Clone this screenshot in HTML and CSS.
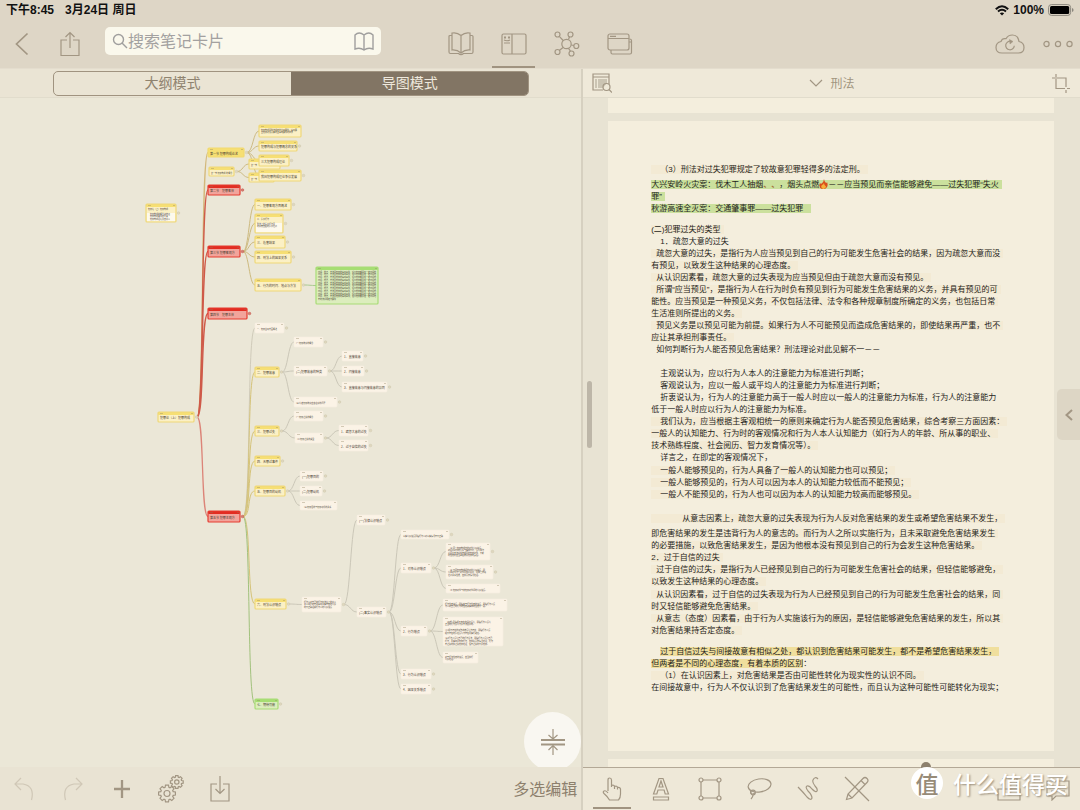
FILE: index.html
```html
<!DOCTYPE html>
<html lang="zh-CN">
<head>
<meta charset="utf-8">
<meta name="viewport" content="width=device-width, initial-scale=1">
<title>刑法</title>
<link rel="stylesheet" href="styles.css">
</head>
<body>
<div class="app">
  <header class="top">
    <div class="status">
      <span>下午8:45</span><span>3月24日 周日</span>
      <span class="power">
        <svg width="14" height="11" viewBox="0 0 14 11" fill="none" stroke="#111" stroke-width="2"><path d="M.8 4.200Q7-1.800 13.200 4.200M3 6.600Q7 3 11 6.600"/><path d="M4.800 8.300Q7 6.500 9.200 8.300L7 10.600Z" fill="#111" stroke="none"/></svg>
        <span>100%</span>
        <svg width="26" height="12" viewBox="0 0 26 12"><rect x=".6" y=".6" width="22" height="10.800" rx="2.800" fill="none" stroke="#8b877d"/><rect x="2" y="2" width="19.200" height="8" rx="1.500" fill="#000"/><path d="M24 4v4q1.600-.6 1.600-2T24 4" fill="#8b877d"/></svg>
      </span>
    </div>
    <nav class="tools">
      <button class="ib" aria-label="返回"><svg width="14" height="24" viewBox="0 0 14 24"><path d="M12.500 1.500L1.500 12L12.500 22.500" stroke-width="1.700"/></svg></button>
      <button class="ib share" aria-label="分享"><svg width="20" height="26" viewBox="0 0 20 26"><path d="M7 9H1v15.500h18V9h-6M10 17V1.500M5.500 6L10 1.500L14.500 6"/></svg></button>
      <label class="search">
        <svg width="16" height="16" viewBox="0 0 16 16"><circle cx="6.500" cy="6.500" r="5"/><path d="M10 10l5 5"/></svg>
        <input type="search" placeholder="搜索笔记卡片" aria-label="搜索笔记卡片">
        <svg width="20" height="19" viewBox="0 0 20 19"><path d="M10 3Q5-1 1 3v14q5-2 9 1q4-3 9-1V3Q15-1 10 3v15"/></svg>
      </label>
      <div class="modes">
        <button class="ib" aria-label="阅读"><svg width="26" height="26" viewBox="0 0 26 26"><path d="M13 4.500Q9 1 4 2v17q5-.5 9 3q4-3.500 9-3V2q-5-1-9 2.500v17.500M4 4.500H2q-1 0-1 1V21q0 1.500 1.500 1.500h8q2.500 2.500 5 0h8q1.500 0 1.500-1.500V5.500q0-1-1-1h-2"/></svg></button>
        <button class="ib on" aria-label="分栏"><svg width="26" height="22" viewBox="0 0 26 22"><rect x="1" y="1" width="24" height="20" rx="1.500"/><path d="M11 1v20M3 7q3 1.500 6 0M3 10h6" /><path d="M3 4.500h2M7 4.500h2" stroke-width="2"/></svg></button>
        <button class="ib" aria-label="脑图"><svg width="26" height="26" viewBox="0 0 26 26"><circle cx="12.500" cy="13" r="4.700"/><circle cx="3.500" cy="3.500" r="2.500"/><circle cx="16.500" cy="3.500" r="2.500"/><circle cx="22.300" cy="15" r="2.500"/><circle cx="3.500" cy="21" r="2.500"/><circle cx="17.500" cy="22.500" r="2.500"/><path d="M5.300 5.300L9.200 9.500M15.500 5.800L14.500 8.500M17.200 14l2.700.5M9 16.500l-3.700 3M14.500 17.400l2 2.800"/></svg></button>
        <button class="ib" aria-label="窗口"><svg width="26" height="22" viewBox="0 0 26 22"><rect x="1" y="1" width="21" height="16" rx="2"/><path d="M1 5.500h21M3 3.300h6M4 17v2.500Q4 21 5.500 21H23q1.500 0 1.500-1.500V7.500q0-1.500-2-1.500M22 9h2.500"/></svg></button>
      </div>
      <div class="right">
        <button class="ib" aria-label="同步"><svg width="30" height="20" viewBox="0 0 30 20"><path d="M7 19Q1 19 1 13.500Q1 8.500 6 7.500Q7 4 11 4.700Q13 1 17.500 1Q23 1 24 7.500Q29 8.500 29 13.500Q29 19 23.500 19Z"/><path d="M16 7.300a4.300 4.300 0 1 0 3.300 4.500"/><path d="M14.500 5.500l3.500 2l-3 2.500z" fill="#a09380" stroke-width=".5"/></svg></button>
        <button class="ib" aria-label="更多"><svg width="30" height="8" viewBox="0 0 30 8"><circle cx="3.500" cy="4" r="2.600"/><circle cx="15" cy="4" r="2.600"/><circle cx="26.500" cy="4" r="2.600"/></svg></button>
      </div>
    </nav>
  </header>
  <main class="split">
    <section class="left">
      <div class="subbar segbar"><div class="seg"><button>大纲模式</button><button class="sel">导图模式</button></div></div>
      <div class="canvas">
        <svg id="map" class="map" width="582" height="669" viewBox="0 98 582 669"></svg>
        <button class="collapse" aria-label="折叠"><svg width="26" height="28" viewBox="0 0 26 28"><path d="M1 12h24M1 16.500h24" stroke-width="1.800"/><path d="M13 1v10M8.500 7l4.500 4l4.500-4M13 27V17.500M8.500 22l4.500-4.500l4.500 4.500"/></svg></button>
      </div>
      <footer class="bar">
        <button class="ib dim" aria-label="撤销"><svg width="20" height="24" viewBox="0 0 20 24"><path d="M7 1L1 7l6 6M1 7h8q12 2 8.500 16"/></svg></button>
        <button class="ib dim" aria-label="重做"><svg width="20" height="24" viewBox="0 0 20 24"><path d="M13 1l6 6l-6 6M19 7h-8q-12 2-8.500 16"/></svg></button>
        <button class="ib" aria-label="添加"><svg width="16" height="18" viewBox="0 0 16 18"><path d="M8 0v18M0 9h16" stroke-width="2.300"/></svg></button>
        <button class="ib" aria-label="设置"><svg id="gears" width="26" height="28" viewBox="0 0 26 28"></svg></button>
        <button class="ib" aria-label="导入"><svg width="20" height="26" viewBox="0 0 20 26"><path d="M7 8H1v17h18V8h-6M10 0v17.500M5.500 13l4.500 4.500l4.500-4.500"/></svg></button>
        <button class="multi">多选编辑</button>
      </footer>
    </section>
    <section class="reader">
      <div class="subbar docbar">
        <button class="ib" aria-label="目录"><svg width="20" height="20" viewBox="0 0 20 20"><path d="M11 17H1V1h16v10M1 4h16"/><path d="M3 6h2v9H3zM6 6h9v4l-4 5H6z" fill="#cbc4b3" stroke="none"/><circle cx="14.500" cy="14" r="3.500"/><path d="M17 16.500l3 3"/></svg></button>
        <button class="title"><svg width="14" height="8" viewBox="0 0 14 8"><path d="M1 1l6 6l6-6"/></svg>刑法</button>
        <button class="ib" aria-label="裁剪"><svg width="18" height="19" viewBox="0 0 18 19"><path d="M4 0v3M4 5v9.500h9M15 14.500h3M0 4h14v9M14 16v3"/></svg></button>
      </div>
      <div class="doc">
        <div class="page prev"></div>
        <article class="page">
          <p><span class="m i2">（3）刑法对过失犯罪规定了较故意犯罪轻得多的法定刑。</span></p>
          <p class="g3"><span class="green">大兴安岭火灾案：伐木工人抽烟<b class="ember">、、</b>，烟头点燃<svg class="fire" width="9" height="10" viewBox="0 0 9 10"><path d="M5 0Q5 2 7 4q1 0 1-1Q10 8 6 10H3Q-1 8 1 4l1 1Q5 3 5 0" fill="#d94f1c"/><path d="M5 4q0 2 1.500 3T5 10H4Q1 8 3 6q1 0 2-2" fill="#f6b13b"/></svg>－－应当预见而亲信能够避免——过失犯罪“失火</span><br><span class="green">罪”</span><br><span class="green end">秋游高速全灭案：交通肇事罪——过失犯罪</span></p>
          <p class="g9"><span class="m">(二)犯罪过失的类型</span><br><span class="i2">1．疏忽大意的过失</span></p>
          <p><span class="m i1">疏忽大意的过失，是指行为人应当预见到自己的行为可能发生危害社会的结果，因为疏忽大意而没</span><br><span class="m">有预见，以致发生这种结果的心理态度。</span></p>
          <p><span class="m i1">从认识因素看，疏忽大意的过失表现为应当预见但由于疏忽大意而没有预见。</span></p>
          <p><span class="m i1">所谓“应当预见”，是指行为人在行为时负有预见到行为可能发生危害结果的义务，并具有预见的可</span><br><span class="m">能性。应当预见是一种预见义务，不仅包括法律、法令和各种规章制度所确定的义务，也包括日常</span><br><span class="m">生活准则所提出的义务。</span></p>
          <p><span class="m i1">预见义务是以预见可能为前提。如果行为人不可能预见而造成危害结果的，即使结果再严重，也不</span><br><span class="m">应让其承担刑事责任。</span></p>
          <p><span class="i1">如何判断行为人能否预见危害结果？刑法理论对此见解不一－－</span></p>
          <p class="g12"><span class="i2">主观说认为，应以行为人本人的注意能力为标准进行判断；</span><br><span class="i2">客观说认为，应以一般人或平均人的注意能力为标准进行判断；</span><br><span class="i2">折衷说认为，行为人的注意能力高于一般人时应以一般人的注意能力为标准，行为人的注意能力</span><br><span>低于一般人时应以行为人的注意能力为标准。</span></p>
          <p><span class="m i2">我们认为，应当根据主客观相统一的原则来确定行为人能否预见危害结果，综合考察三方面因素：</span><br><span class="m">一般人的认知能力、行为时的客观情况和行为人本人认知能力（如行为人的年龄、所从事的职业、</span><br><span class="m">技术熟练程度、社会阅历、智力发育情况等）。</span><br><span class="i2">详言之，在即定的客观情况下，</span></p>
          <p class="g1"><span class="m i2">一般人能够预见的，行为人具备了一般人的认知能力也可以预见；</span><br><span class="m i2">一般人能够预见的，行为人可以因为本人的认知能力较低而不能预见；</span><br><span class="m i2">一般人不能预见的，行为人也可以因为本人的认知能力较高而能够预见。</span></p>
          <p class="g12"><span class="m i4">从意志因素上，疏忽大意的过失表现为行为人反对危害结果的发生或希望危害结果不发生，</span></p>
          <p class="g3"><span class="m">即危害结果的发生是违背行为人的意志的。而行为人之所以实施行为，且未采取避免危害结果发生</span><br><span class="m">的必要措施，以致危害结果发生，是因为他根本没有预见到自己的行为会发生这种危害结果。</span><br><span class="m">2．过于自信的过失</span></p>
          <p><span class="m i1">过于自信的过失，是指行为人已经预见到自己的行为可能发生危害社会的结果，但轻信能够避免，</span><br><span class="m">以致发生这种结果的心理态度。</span></p>
          <p class="g1"><span class="m i1">从认识因素看，过于自信的过失表现为行为人已经预见到自己的行为可能发生危害社会的结果，同</span><br><span class="m">时又轻信能够避免危害结果。</span></p>
          <p><span class="m i1">从意志（态度）因素看，由于行为人实施该行为的原因，是轻信能够避免危害结果的发生，所以其</span><br><span class="m">对危害结果持否定态度。</span></p>
          <p class="g9"><span class="yellow in">过于自信过失与间接故意有相似之处，都认识到危害结果可能发生，都不是希望危害结果发生，</span><br><span class="yellow">但两者是不同的心理态度，有着本质的区别</span>：<br><span class="m i2">（1）在认识因素上，对危害结果是否由可能性转化为现实性的认识不同。</span><br><span>在间接故意中，行为人不仅认识到了危害结果发生的可能性，而且认为这种可能性可能转化为现实；</span></p>
        </article>
        <div class="page next"></div>
        <span class="grip"></span>
        <button class="drawer" aria-label="展开"><svg width="8" height="12" viewBox="0 0 8 12"><path d="M7 1L1.500 6L7 11" stroke-width="2"/></svg></button>
      </div>
      <footer class="bar ink">
        <span class="knob"></span>
        <button class="ib on" aria-label="手型"><svg width="20" height="24" viewBox="0 0 20 24"><path d="M6 14V3q0-2 1.700-2T9.500 3v7V8.500q2.500-1 3 1q2.500-1 3 1q2.500-.5 3 1.500v5q0 4-2 6H7.500Q6 20 2 16.500q-1.500-1.700 0-2.500q2-1 4 2M12.500 9.500V12M15.500 10.500v2"/></svg></button>
        <button class="ib" aria-label="高亮"><svg width="18" height="24" viewBox="0 0 18 24"><path d="M1.500 17L7 1.500h4L16.500 17h-3.300l-1.100-4H6l-1.200 4zM7 10h4L9 4zM1.500 20h15v3h-15z"/></svg></button>
        <button class="ib" aria-label="选框"><svg width="24" height="24" viewBox="0 0 24 24"><circle cx="3" cy="3" r="2"/><circle cx="21" cy="3" r="2"/><circle cx="3" cy="21" r="2"/><circle cx="21" cy="21" r="2"/><path d="M5 3h14M5 21h14M3 5v14M21 5v14"/></svg></button>
        <button class="ib" aria-label="套索"><svg width="26" height="24" viewBox="0 0 26 24"><ellipse cx="13.500" cy="8.500" rx="11.500" ry="6.500" transform="rotate(-9 13 8)"/><circle cx="7" cy="15.500" r="2.300"/><path d="M4.500 13Q4 19 9 16M7 18q0 2-2 4"/></svg></button>
        <button class="ib" aria-label="画笔"><svg width="22" height="24" viewBox="0 0 22 24"><path d="M1 10q5 5 9 10q4 4 5 1q0-3-4-7q-3-4-1-5q2-1 5 3q4 4 5 2q1-2-2-5q-3-4-2-6q2-4 5-1"/></svg></button>
        <button class="ib" aria-label="铅笔"><svg width="26" height="26" viewBox="0 0 26 26"><path d="M1 1l24 24M2.500 23.500L4 18L19 2.500q2-2 4 0t0 4L8 22zM17 4.500l4 4M4 18l4 4"/></svg></button>
        <button class="ib stamp" aria-label="文字框"><svg width="24" height="24" viewBox="0 0 24 24"><path d="M6 1h14v10M1 12h22v11H1zM6 12V1"/></svg></button>
        <button class="ib" aria-label="评论"><svg width="24" height="24" viewBox="0 0 24 24"><path d="M1 4h22v15H10l-4 4v-4H1zM5 9h14M5 14h14"/></svg></button>
        <div class="mark"><span class="disc">值</span><span>什么值得买</span></div>
      </footer>
    </section>
  </main>
</div>
<script src="map.js"></script>
</body>
</html>
```
FILE: map.js
```js
const NS = 'http://www.w3.org/2000/svg';
function el(parent, tag, attrs, text) {
  const e = document.createElementNS(NS, tag);
  for (const k in attrs) e.setAttribute(k, attrs[k]);
  if (text) e.textContent = text;
  parent.appendChild(e);
  return e;
}
const map = document.getElementById('map');
const themes = {
  y: { edge: '#efd879', head: '#f6df73', body: '#fbf0c5' },
  Y: { edge: '#f1da70', head: '#f6df73', body: '#f6df73' },
  r: { edge: '#e53c31', head: '#e22d22', body: '#f2a49b' },
  w: { edge: '#f6eee0', head: '#fbf3e6', body: '#fbf3e6' },
  g: { edge: '#a8dc76', head: '#a6de72', body: '#dcedbd' }
};
// id: [x, y, width, height, theme, text lines, font size]
const nodes = {
  a: [208, 148, 36, 9, 'Y', ['第一节 犯罪构成论述'], 3],
  b: [209, 167, 25, 9, 'y', ['第一节 犯罪构成 的 概念'], 2],
  a1: [259, 125, 42, 12, 'y', ['犯罪构成是刑法规定的主观要件，客观要', '立犯罪必须具备的主客观要件的整体'], 2],
  a2: [259, 141, 38, 10, 'y', ['犯罪构成与犯罪概念的关系'], 3],
  b1: [249, 159, 31, 10, 'y', ['第一节'], 2],
  b2: [249, 173, 25, 9, 'y', ['第一节'], 2],
  a3: [259, 155, 30, 11, 'y', ['三大犯罪构成理论'], 3],
  a4: [259, 170, 42, 11, 'y', ['我国犯罪构成理论争议发展'], 3],
  r2: [208, 185, 32, 10, 'r', ['第二节　犯罪客体'], 3],
  note: [146, 204, 30, 18, 'y', ['犯罪论（上）犯罪构成', '', '　犯罪构成的概念和特征', '　犯罪构成要件的分类', '　犯罪构成理论及其意义'], 2],
  r3: [208, 246, 32, 11, 'r', ['第三节 犯罪客观方'], 3],
  c1: [255, 199, 36, 11, 'y', ['一、犯罪客观方面概述'], 3],
  c2: [255, 214, 28, 19, 'y', ['二、危害行为', '', '刑法上的危害行为是', '的意志支配的危害社会'], 2],
  c3: [255, 236, 30, 12, 'y', ['三、危害结果'], 3],
  c4: [255, 251, 36, 12, 'y', ['四、刑法上的因果关系'], 3],
  c5: [255, 279, 46, 12, 'y', ['五、行为的时间、地点与方法'], 3],
  g: [316, 267, 62, 37, 'g', Array(10).fill('时间、地点、方法是犯罪的客观条件，任何犯罪都是在一定时间地').concat(['有的法律规定为要件']), 2],
  r4: [208, 308, 39, 11, 'r', ['第四节　犯罪主体'], 3],
  d1: [255, 323, 29, 10, 'w', ['一、犯罪主观方面概述'], 2],
  d2: [255, 367, 24, 10, 'y', ['二、犯罪故意'], 3],
  e1: [294, 337, 29, 10, 'w', ['(一)犯罪故意的概念'], 2],
  e2: [294, 366, 33, 10, 'w', ['(二)犯罪故意的种类'], 3],
  e3: [294, 397, 43, 10, 'w', ['(三)认定犯罪故意应该注意的问题'], 2],
  f1: [342, 351, 21, 10, 'w', ['1、直接故意'], 3],
  f2: [342, 366, 22, 10, 'w', ['2、间接故意'], 3],
  f3: [342, 382, 45, 10, 'w', ['3、直接故意与间接故意的异同'], 3],
  root: [158, 412, 36, 10, 'y', ['犯罪论（上）犯罪构成'], 3],
  d3: [255, 426, 24, 10, 'y', ['三、犯罪过失'], 3],
  h1: [294, 411, 29, 10, 'w', ['(一)犯罪过失的概念'], 2],
  h2: [295, 433, 28, 10, 'w', ['(二)犯罪过失的类型'], 2],
  i1: [339, 425, 29, 11, 'w', ['1、疏忽大意的过失'], 3],
  i2: [339, 440, 29, 11, 'w', ['2、过于自信的过失'], 3],
  d4: [255, 456, 25, 10, 'y', ['四、无罪过事件'], 3],
  d5: [255, 486, 30, 10, 'y', ['五、犯罪目的动机'], 3],
  j1: [300, 471, 23, 10, 'w', ['(一)犯罪目的'], 3],
  j2: [300, 486, 22, 10, 'w', ['(二)犯罪动机'], 3],
  j3: [300, 501, 37, 9, 'w', ['　(三)犯罪目的与犯罪动机的关系'], 2],
  r5: [208, 511, 32, 11, 'r', ['第五节 犯罪主观方'], 3],
  k1: [357, 515, 28, 10, 'w', ['(一)法律认识错误'], 3],
  l1: [401, 530, 48, 9, 'w', ['事实认识错误是指行为人对事实情况有不正确'], 2],
  l2: [401, 563, 30, 10, 'w', ['1、对象认识错误'], 3],
  m1: [446, 543, 44, 17, 'w', ['　(1) 同一犯罪构成内的对象认识错误', '对侵害对象的认识与实际不符，误认甲为', '以侵害其法律性质相同的犯罪对象，不影', '的性质仍应当承担故意犯罪的责任。'], 2],
  m2: [446, 565, 47, 14, 'w', ['　(2) 不同犯罪构成间的对象认识错误，即', '认甲对象为乙对象而加以侵害，而甲乙体现', '社会关系性质，应按具体情况处理。'], 2],
  m3: [446, 584, 54, 9, 'w', ['　(3) 犯罪对象与非犯罪对象间的认识错误。'], 2],
  k0: [302, 597, 39, 15, 'w', ['行为人对自己的行为在法律上的意义', '意义或者对有关客观事实存在的认识', '的不正确理解行为人的认识错误'], 2],
  d6: [255, 599, 31, 10, 'y', ['六、刑法认识错误'], 3],
  k2: [357, 607, 29, 10, 'w', ['(二)事实认识错误'], 3],
  n1: [443, 599, 64, 12, 'w', ['行为性质错误，即指由于行为性质的错误，即指行为人误', '为人对自己的行为的性质和实际的性质不一致。'], 2],
  n2: [443, 617, 60, 29, 'w', ['　(假想) 是指把不存在的侵害误认，即指行为人误认', '正当的行为误认为是不法侵害的。', '', '(二)把不存在的紧急状态误认为存在，即指行为人误', '把不存在的危险误认为存在而实行避险。', '', '(三)行为人误认自己的行为合法，即指行为人误认自己', '行为，而实际是犯罪行为，应按照具体情况处理，行为', '有过失的按过失犯罪处理，没有过失的不是犯罪。'], 2],
  l3: [401, 626, 26, 10, 'w', ['2、行为错误'], 3],
  n3: [443, 652, 35, 11, 'w', ['对于行为性质的错误，应当按行', '认识处理。'], 2],
  l4: [401, 669, 30, 10, 'w', ['3、行为认识错误'], 3],
  l5: [401, 684, 30, 10, 'w', ['4、因果关系错误'], 3],
  d7: [255, 699, 23, 10, 'g', ['七、期待可能'], 3]
};
const pale = '#cbc7b8';
const links = [
  ['root', '#d3b87a', 'a'], ['root', '#cf5a49', 'r2 r3 r4'], ['root', '#dc8478', 'r5'],
  ['a', '#cdbb83', 'a1 a2 a3 a4'], ['b', '#cdbb83', 'b1 b2'], ['r3', '#cdba7f', 'c1 c2 c3 c4 c5'], ['c5', '#a9ca8f', 'g'],
  ['r5', '#d0cbba', 'd1'], ['r5', '#d5c379', 'd2 d3 d4 d5 d6'], ['r5', '#a2c27d', 'd7'],
  ['d2', pale, 'e1 e2 e3'], ['e2', pale, 'f1 f2 f3'], ['d3', pale, 'h1 h2'], ['h2', pale, 'i1 i2'],
  ['d5', pale, 'j1 j2 j3'], ['d6', pale, 'k0'], ['k0', pale, 'k1 k2'], ['k2', pale, 'l1 l2 l3 l4 l5'],
  ['l2', pale, 'm1 m2 m3'], ['l3', pale, 'n1 n2 n3']
];
for (const [from, color, kids] of links) {
  const p = nodes[from], x = p[0] + p[2] + 3, y = p[1] + p[3] / 2;
  for (const id of kids.split(' ')) {
    const c = nodes[id], cx = c[0], cy = c[1] + c[3] / 2, dx = cx - x;
    const wide = from === 'root' || from === 'r5';
    el(map, 'path', {
      d: `M${x} ${y}C${x + dx * (wide ? .7 : .5)} ${y} ${x + dx * (wide ? .3 : .5)} ${cy} ${cx} ${cy}`,
      fill: 'none', stroke: color, 'stroke-width': from === 'root' ? 1.3 : 1
    });
  }
}
const noDot = ['m3', 'n1', 'n2', 'n3', 'j3', 'b1', 'b2', 'g', 'a1'];
for (const id in nodes) {
  const [x, y, w, h, t, lines, size] = nodes[id], c = themes[t];
  if (!noDot.includes(id))
    el(map, 'circle', { cx: x + w + 2.5, cy: y + h / 2, r: 1.3, fill: t === 'r' ? '#cf8075' : '#dfd7be', stroke: t === 'r' ? '#c94c40' : '#cfc8ae', 'stroke-width': .5 });
  el(map, 'rect', { x, y, width: w, height: h, rx: 1, fill: c.body });
  el(map, 'rect', { x, y, width: w, height: 3, rx: 1, fill: c.head });
  if (id === 'note' || id === 'c2') el(map, 'rect', { x: x + 1, y: y + 9, width: w - 2, height: h - 10, fill: '#fdf9ed' });
  el(map, 'rect', { x, y, width: w, height: h, rx: 1, fill: 'none', stroke: c.edge, 'stroke-width': t === 'w' ? .6 : 1.2 });
  el(map, 'path', { d: `M${x + 2} ${y + 1.5}h3M${x + w - 3} ${y + 1.5}h2`, stroke: '#8d7f5c', 'stroke-width': .6, opacity: .6 });
  const step = id === 'n2' || id === 'g' ? 2.75 : 2.6;
  const first = lines.length === 1 ? y + h / 2 + 2 : y + 5.6;
  lines.forEach((s, i) => s && el(map, 'text', { x: x + 2, y: first + i * step, 'font-size': size }, s));
}
const gears = document.getElementById('gears');
function gear(cx, cy, r, inner) {
  const pts = [];
  for (let i = 0; i < 8; i++) {
    for (const [a, k] of [[-.3, .76], [-.18, 1], [.18, 1], [.3, .76]]) {
      const t = i * Math.PI / 4 + a;
      pts.push((cx + Math.cos(t) * r * k).toFixed(1) + ',' + (cy + Math.sin(t) * r * k).toFixed(1));
    }
  }
  el(gears, 'polygon', { points: pts.join(' ') });
  el(gears, 'circle', { cx, cy, r: inner });
}
gear(9, 18.5, 8.5, 3);
gear(18.8, 7, 6.5, 2.2);
```
FILE: styles.css
```css
* { box-sizing: border-box; }
body { margin: 0; font-family: "Noto Sans CJK SC", "Noto Sans", sans-serif; color: #222; }
button { border: 0; padding: 0; background: none; font: inherit; color: inherit; }
svg { display: block; flex: none; }
.app { height: 100vh; display: flex; flex-direction: column; overflow: hidden; background: #ebe7d7; }
.ib { position: relative; width: 44px; height: 100%; flex: none; display: grid; place-items: center; }
.ib svg, .title svg, .collapse svg, .drawer svg { fill: none; stroke: #a29683; stroke-width: 1.2; }
.ib.on::after { content: ""; position: absolute; left: 1px; right: 1px; bottom: 0; height: 2px; background: #a09380; }

.top { flex: none; background: #ded6c6; border-bottom: 1px solid #e4ddce; }
.status { height: 20px; padding: 0 6px; display: flex; align-items: center; gap: 11px; font: 600 12px/20px "Liberation Sans", "Noto Sans CJK SC", sans-serif; color: #111; }
.power { margin-left: auto; display: flex; align-items: center; gap: 4px; }
.tools { height: 48px; display: flex; align-items: center; }
.share { margin-left: 4px; }
.search { width: 276px; height: 28px; margin: 0 53px 6px 13px; padding: 0 7px; border-radius: 5px; background: #faf8ec; display: flex; align-items: center; }
.search svg { fill: none; stroke: #a09f9e; stroke-width: 1.4; }
.search input { flex: 1; min-width: 0; border: 0; padding: 0 0 3px; background: none; outline: 0; font: 16px/24px "Noto Sans CJK SC", sans-serif; }
.search input::placeholder { color: #a3a1a0; opacity: 1; }
.modes { height: 100%; display: flex; }
.modes .ib { width: 53px; }
.modes .ib.on::after { left: 5px; right: 5px; }
.right { height: 100%; margin-left: auto; display: flex; gap: 4px; }

.split { flex: 1; min-height: 0; display: grid; grid-template-columns: 54fr 46fr; }
.left, .reader { min-width: 0; min-height: 0; display: flex; flex-direction: column; }
.left { border-right: 2px solid #d6d0c0; }
.subbar { flex: none; height: 29px; background: #eae4d4; border-bottom: 1px solid #e1dccc; }
.segbar { padding: 2px 52px 2px 53px; }
.seg { height: 25px; display: flex; border: 1px solid #a09380; border-radius: 5px; overflow: hidden; font-size: 14px; line-height: 20px; color: #8f836f; }
.seg button { flex: 1; padding-bottom: 3px; }
.seg .sel { background: #827564; color: #eee8dc; }
.canvas { position: relative; flex: 1; min-height: 0; overflow: hidden; background: #ebe7d7; }
.map text { font-family: "Noto Sans CJK SC", sans-serif; fill: #4b4234; }
.collapse { position: absolute; right: 0; bottom: -4px; width: 57px; height: 59px; border-radius: 50%; background: #f9f7f1; display: grid; place-items: center; }
.bar { position: relative; flex: none; height: 43px; display: flex; align-items: center; background: #e9e3d3; }
.left .bar { gap: 5px; padding: 0 4px 0 2px; }
.dim { opacity: .35; }
.multi { margin-left: auto; padding-bottom: 2px; font-size: 16px; line-height: 24px; color: #8d806d; }

.docbar { display: flex; align-items: center; justify-content: space-between; background: #efe9d9; }
.docbar .ib { width: 38px; }
.title { display: flex; align-items: center; gap: 8px; font-size: 12px; line-height: 20px; color: #a1957f; }
.doc { position: relative; flex: 1; min-height: 0; overflow: hidden; padding: 0 26px 0 25px; background: #e8e3d3; display: flex; flex-direction: column; gap: 8px; }
.page { flex: none; background: #f4eedd; }
.prev { height: 15px; }
.next { height: 20px; }
article.page { min-height: 630px; padding: 43px 0 52px 43px; font: 8px/12px "Liberation Sans", "Noto Sans CJK SC", sans-serif; white-space: nowrap; color: #252420; }
article p { margin: 0; }
article .g1 { margin-top: 1px; }
article .g3 { margin-top: 3px; }
article .g9 { margin-top: 9px; }
article .g12 { margin-top: 12px; }
.i1 { padding-left: 5px; }
.i2 { padding-left: 9px; }
.i4 { padding-left: 31px; }
.m { background: #f3ead4; padding-right: 3px; }
.green { background: #cbe09d; padding-right: 3px; }
.end { padding-right: 8px; }
.yellow { background: #f0df9d; }
.in { margin-left: 9px; padding-right: 3px; }
.ember { color: #a3743e; }
.fire { display: inline-block; vertical-align: -2px; }
.grip { position: absolute; left: 4px; top: 283px; width: 5px; height: 67px; border-radius: 3px; background: #bdb6a8; }
.drawer { position: absolute; right: 0; top: 291px; width: 23px; height: 51px; border-radius: 5px 0 0 5px; background: #ddd6c5; display: grid; place-items: center; }
.ink { background: #eee8d8; border-top: 1px solid #b3a896; gap: 5px; padding-left: 7px; }
.ink .ib.on::after { left: 3px; right: 3px; bottom: 1px; }
.stamp { margin-left: auto; }
.knob { position: absolute; left: 69%; top: -6px; width: 10px; height: 10px; border-radius: 50%; background: #8d806d; transform: translateX(-50%); }
.mark { position: absolute; right: 12px; top: -2px; display: flex; align-items: center; gap: 10px; font-size: 23px; font-weight: 500; line-height: 34px; color: #fff; text-shadow: 1px 1px 2px #9a8e7b; }
.disc { width: 32px; height: 32px; border-radius: 50%; background: #fff; color: #978b78; text-align: center; font-size: 23px; line-height: 32px; text-shadow: none; }
```
